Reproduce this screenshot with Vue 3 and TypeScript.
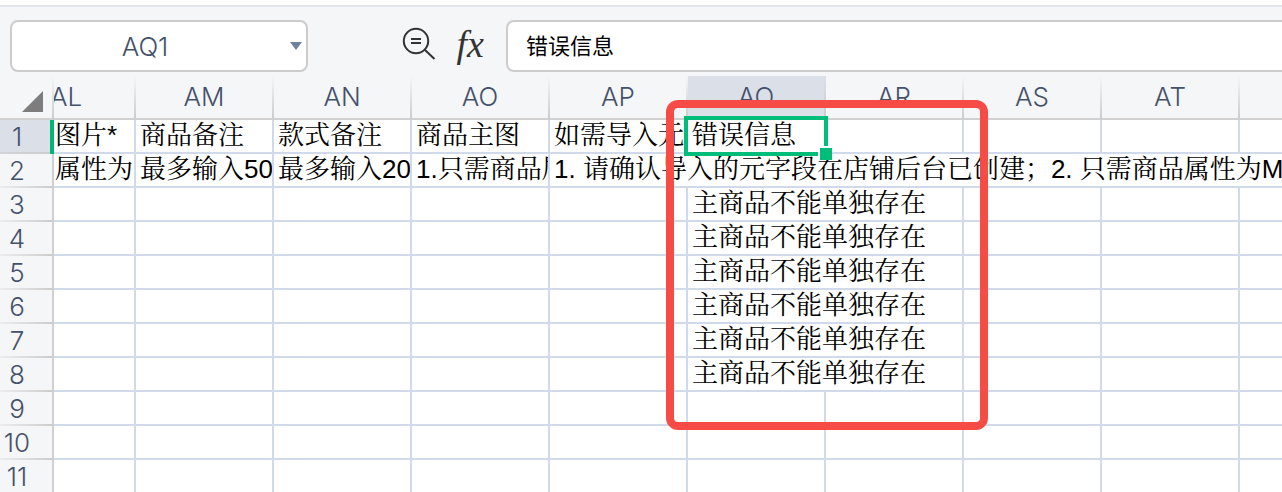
<script setup lang="ts">
import { ref } from 'vue'

interface Cell {
  text: string
  span?: number
  active?: boolean
}

interface Row {
  id: number
  cells: Cell[]
}

const columns = ['AL', 'AM', 'AN', 'AO', 'AP', 'AQ', 'AR', 'AS', 'AT', '']
const activeColumn = 'AQ'
const activeRow = 1

const cellName = ref('AQ1')
const formula = ref('错误信息')

const blanks = (count: number): Cell[] => Array.from({ length: count }, () => ({ text: '' }))

const errorRow = (id: number): Row => ({
  id,
  cells: [...blanks(5), { text: '主商品不能单独存在', span: 2 }, ...blanks(3)],
})

const rows: Row[] = [
  {
    id: 1,
    cells: [
      { text: '图片*' },
      { text: '商品备注' },
      { text: '款式备注' },
      { text: '商品主图' },
      { text: '如需导入元' },
      { text: '错误信息', active: true },
      ...blanks(4),
    ],
  },
  {
    id: 2,
    cells: [
      { text: '属性为' },
      { text: '最多输入50' },
      { text: '最多输入20' },
      { text: '1.只需商品属' },
      { text: '1. 请确认导入的元字段在店铺后台已创建；2. 只需商品属性为M', span: 6 },
    ],
  },
  ...[3, 4, 5, 6, 7, 8].map(errorRow),
  ...[9, 10, 11].map((id) => ({ id, cells: blanks(10) })),
]
</script>

<template>
  <div class="sheet">
    <header class="toolbar">
      <div class="name-box">
        <input v-model="cellName" class="name-input" type="text" aria-label="单元格名称" />
        <button class="name-toggle" type="button" aria-label="展开">
          <svg width="12" height="8" viewBox="0 0 12 8"><path d="M0 0h12L6 8z" fill="#6f819f" /></svg>
        </button>
      </div>
      <div class="tools">
        <button class="tool" type="button" aria-label="查找">
          <svg width="36" height="36" viewBox="0 0 36 36" fill="none" stroke="#333" stroke-width="2">
            <circle cx="15" cy="15" r="12.200" />
            <path d="M23.500 23.500 33.500 33M10 13h10M10 17h10" />
          </svg>
        </button>
        <button class="tool fx" type="button" aria-label="插入函数">fx</button>
      </div>
      <input v-model="formula" class="formula" type="text" aria-label="编辑栏" />
    </header>

    <main class="grid">
      <table>
        <colgroup>
          <col class="col-index" />
          <col class="col-first" />
          <col v-for="n in 8" :key="n" class="col" />
          <col />
        </colgroup>
        <thead>
          <tr>
            <th class="corner">
              <svg width="21" height="21" viewBox="0 0 21 21"><path d="M21 0v21H0z" fill="#7d7d7d" /></svg>
            </th>
            <th
              v-for="name in columns"
              :key="name"
              class="col-head"
              :class="{ current: name === activeColumn }"
              scope="col"
            >
              <div class="label"><span>{{ name }}</span></div>
            </th>
          </tr>
        </thead>
        <tbody>
          <tr v-for="row in rows" :key="row.id">
            <th class="row-head" :class="{ current: row.id === activeRow }" scope="row">{{ row.id }}</th>
            <td v-for="(cell, i) in row.cells" :key="i" :colspan="cell.span ?? 1" :class="{ first: i === 0 }">
              <div class="text">{{ cell.text }}</div>
              <div v-if="cell.active" class="selection"><i class="handle"></i></div>
            </td>
          </tr>
        </tbody>
      </table>
      <div class="callout"></div>
    </main>
  </div>
</template>

<style>
body {
  margin: 0;
  background: #fff;
}
</style>

<style scoped>
.sheet {
  display: flex;
  flex-direction: column;
  height: 100vh;
  overflow: hidden;
  box-sizing: border-box;
  padding-top: 5px;
  font-family: Inter, "Noto Sans CJK SC", sans-serif;
  color: #44516b;
}

.sheet * {
  box-sizing: border-box;
}

button {
  padding: 0;
  border: 0;
  background: none;
}

.toolbar {
  display: flex;
  flex: none;
  padding: 13px 0 4px 10px;
  border-top: 2px solid #e1e4ea;
  background: #f5f6f8;
}

.name-box {
  display: flex;
  width: 298px;
  height: 52px;
  border: 2px solid #ccc;
  border-radius: 8px;
  background: #fff;
}

.name-input {
  flex: 1;
  min-width: 0;
  padding: 0 8px 0 0;
  border: 0;
  outline: 0;
  background: none;
  color: inherit;
  font: 300 26px Inter, sans-serif;
  text-align: center;
}

.name-toggle {
  display: flex;
  align-items: center;
  justify-content: center;
  width: 20px;
}

.tools {
  display: flex;
  align-items: center;
  justify-content: flex-end;
  gap: 20px;
  width: 198px;
  padding: 0 22px 4px 0;
}

.tool {
  display: flex;
  height: 36px;
}

.fx {
  align-items: center;
  color: #333;
  font: italic 38px/36px "Liberation Serif", serif;
}

.formula {
  flex: 1;
  min-width: 0;
  height: 52px;
  padding: 0 18px 4px;
  border: 2px solid #ccc;
  border-right: 0;
  border-radius: 8px 0 0 8px;
  outline: 0;
  background: #fff;
  color: #000;
  font: 22px "Liberation Sans", "Noto Sans CJK SC", sans-serif;
}

.grid {
  position: relative;
  flex: 1;
  min-height: 0;
  overflow: hidden;
}

table {
  width: 100%;
  min-width: 1282px;
  border-collapse: separate;
  border-spacing: 0;
  table-layout: fixed;
}

.col-index {
  width: 54px;
}

.col-first {
  width: 82px;
}

.col {
  width: 138px;
}

th,
td {
  padding: 0;
}

th {
  background-color: #f5f6f8;
  font-size: 26px;
  font-weight: 300;
  line-height: 32px;
}

.corner,
.col-head {
  height: 44px;
  border-bottom: 2px solid #d0d0d0;
  background-image: linear-gradient(to bottom, #f5f6f8, #ccc);
  background-position: right top;
  background-size: 2px 100%;
  background-repeat: no-repeat;
}

.col-head:last-child {
  background-image: none;
}

.corner {
  padding: 8px 11px 0 0;
  line-height: 0;
  text-align: right;
}

.label {
  display: flex;
  justify-content: flex-end;
  overflow: hidden;
}

.label span {
  flex: 0 0 138px;
  padding-right: 2px;
  text-align: center;
}

.row-head {
  height: 34px;
  padding: 0 20px 0 0;
  background-image: linear-gradient(#d0d0d0, #d0d0d0), linear-gradient(to right, #ececee, #ccc);
  background-position: right top, left bottom;
  background-size: 2px 100%, 100% 2px;
  background-repeat: no-repeat;
  text-align: center;
}

.current {
  background-color: #dbdfe8;
}

.col-head.current {
  background-image: linear-gradient(to bottom, #dbdfe8, #ccc);
}

.row-head.current {
  background-image: linear-gradient(#00b578, #00b578), linear-gradient(to right, #d2d4d9, #ccc);
  background-size: 4px 100%, 100% 2px;
}

td {
  position: relative;
  border-right: 2px solid #d0daea;
  border-bottom: 2px solid #d0daea;
  background: #fff;
}

td:last-child {
  border-right: 0;
}

.text {
  height: 32px;
  padding-left: 4px;
  overflow: hidden;
  color: #000;
  font: 26px/30px "Liberation Sans", "Songti SC", "Noto Serif CJK SC", "Noto Sans CJK SC", sans-serif;
  white-space: nowrap;
}

.first .text {
  padding-left: 1px;
}

.selection {
  position: absolute;
  z-index: 1;
  inset: -4px -4px -4px -4px;
  border: 4px solid #00bd79;
}

.handle {
  position: absolute;
  right: -8px;
  bottom: -8px;
  width: 14px;
  height: 14px;
  border: solid #fff;
  border-width: 2px 0 0 2px;
  background: #00bd79;
}

.callout {
  position: absolute;
  z-index: 2;
  top: 24px;
  left: 666px;
  width: 322px;
  height: 330px;
  border: 8px solid #f74b46;
  border-radius: 12px;
  pointer-events: none;
}
</style>
